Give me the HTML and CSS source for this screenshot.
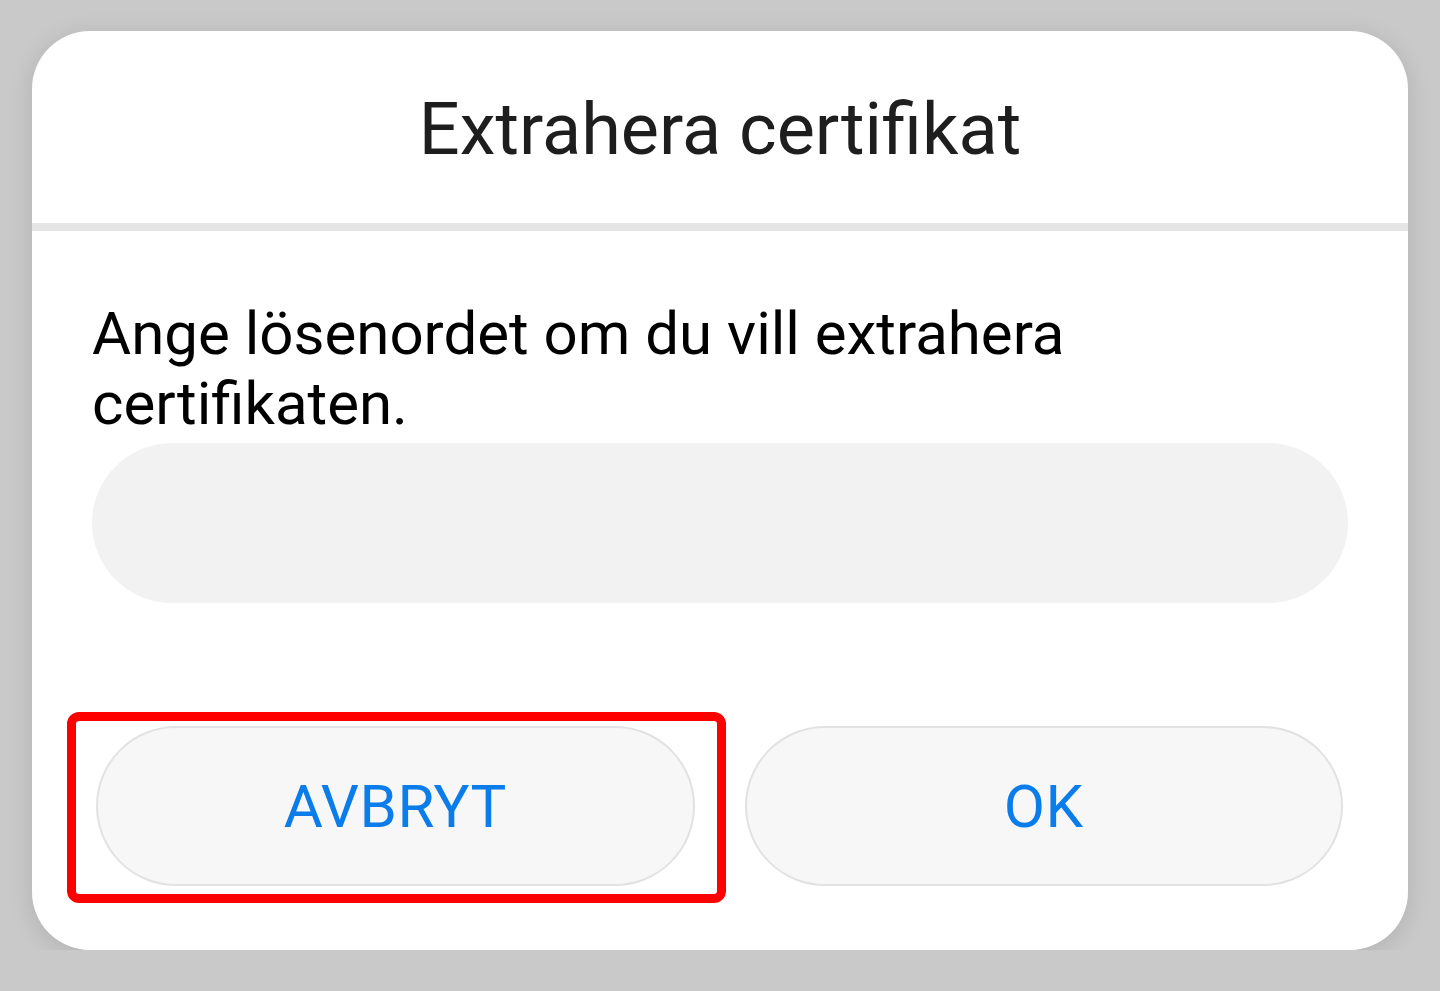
FILE: index.html
```html
<!DOCTYPE html>
<html lang="sv">

<head>
    <meta charset="UTF-8">
    <meta name="viewport" content="width=device-width, initial-scale=1.0">
    <title>Extrahera certifikat</title>

    <link rel="stylesheet" href="styles.css">
</head>

<body>
    <!-- dialogruta -->
    <div class="dialog">
        <div class="dialogHead">
            <h1 class="dialogTitle">Extrahera certifikat</h1>
        </div>
        <div class="dialogDivider"></div>

        <div class="dialogBody">
            <p class="dialogText">Ange lösenordet om du vill extrahera certifikaten.</p>
            <input class="pwInput" type="password" aria-label="Lösenord">
        </div>

        <div class="dialogButtons">
            <div class="btnWrap">
                <button class="btn">AVBRYT</button>
                <!-- röd markering -->
                <span class="highlight"></span>
            </div>
            <div class="btnWrap">
                <button class="btn">OK</button>
            </div>
        </div>
    </div>
</body>

</html>
```

FILE: styles.css
```css
body {
    margin: 0;
    background-color: #c9c9c9;
    font-family: Roboto, "Noto Sans", sans-serif;
}

.dialog {
    width: 1376px;
    height: 919px;
    margin: 31px 32px 0;
    background-color: #fff;
    border-radius: 58px;
    box-shadow: 0 4px 24px rgba(0, 0, 0, 0.12);
    display: flex;
    flex-direction: column;
    overflow: hidden;
}

.dialogHead {
    height: 192px;
    display: flex;
    align-items: center;
    justify-content: center;
}

.dialogTitle {
    margin: 0;
    margin-top: 4px;
    font-size: 72px;
    font-weight: 400;
    color: #1e1e1e;
}

.dialogDivider {
    height: 8px;
    background-color: #e5e5e5;
}

.dialogBody {
    padding: 68px 60px 0;
}

.dialogText {
    margin: 0;
    width: 1020px;
    font-size: 60px;
    line-height: 70px;
    color: #000;
}

.pwInput {
    display: block;
    box-sizing: border-box;
    width: 1256px;
    height: 160px;
    margin-top: 4px;
    border: none;
    border-radius: 80px;
    background-color: #f2f2f2;
    outline: none;
}

/* knappar */
.dialogButtons {
    display: flex;
    gap: 50px;
    padding: 123px 65px 0 64px;
}

.btnWrap {
    position: relative;
    flex: 1;
}

.btn {
    display: block;
    box-sizing: border-box;
    width: 100%;
    height: 160px;
    border: 2px solid #e2e2e2;
    border-radius: 80px;
    background-color: #f7f7f7;
    color: #0a7deb;
    font-family: Roboto, "Noto Sans", sans-serif;
    font-size: 60px;
    letter-spacing: 0.5px;
}

.highlight {
    position: absolute;
    top: -14px;
    left: -29px;
    right: -31px;
    bottom: -17px;
    border: 9px solid #ff0000;
    border-radius: 12px;
}
```
